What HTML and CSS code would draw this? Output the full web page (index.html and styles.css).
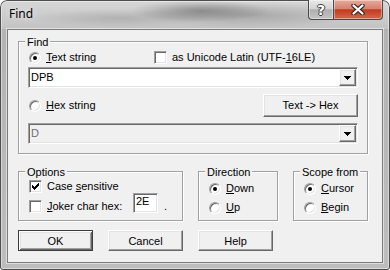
FILE: index.html
```html
<!DOCTYPE html>
<html lang="en">
<head>
  <meta charset="UTF-8">
  <title>Find</title>
  <link rel="stylesheet" href="styles.css">
</head>
<body>
  <div class="window">
    <div class="titlebar">
      <span class="title">Find</span>
      <div class="caption">
        <span class="cap cap-help">?</span>
        <span class="cap cap-close">
          <svg width="14" height="11" viewBox="0 0 14 11">
            <path d="M2.5 1.5 L11.5 9.5 M11.5 1.5 L2.5 9.5" stroke="#3b2a26" stroke-width="4.4" stroke-linecap="round"/>
            <path d="M2.5 1.5 L11.5 9.5 M11.5 1.5 L2.5 9.5" stroke="#fff" stroke-width="2.2" stroke-linecap="round"/>
          </svg>
        </span>
      </div>
    </div>

    <div class="client">
      <div class="group group-find">
        <div class="legend">Find</div>
        <div class="row row-text">
          <label class="opt opt-first"><span class="radio on"></span><span><u>T</u>ext string</span></label>
          <label class="opt"><span class="check"></span><span>as Unicode Latin (UTF-<u>1</u>6LE)</span></label>
        </div>
        <div class="combo">
          <span class="combo-text">DPB</span>
          <span class="drop"><svg width="7" height="4" viewBox="0 0 7 4" shape-rendering="crispEdges"><path d="M0 0h7v1h-1v1h-1v1h-1v1h-1v-1h-1v-1h-1v-1h-1z" fill="#000"/></svg></span>
        </div>
        <div class="row row-hex">
          <label class="opt"><span class="radio"></span><span><u>H</u>ex string</span></label>
          <span class="btn btn-tohex">Text -&gt; Hex</span>
        </div>
        <div class="combo combo-disabled">
          <span class="combo-text">D</span>
          <span class="drop"><svg width="7" height="4" viewBox="0 0 7 4" shape-rendering="crispEdges"><path d="M0 0h7v1h-1v1h-1v1h-1v1h-1v-1h-1v-1h-1v-1h-1z" fill="#000"/></svg></span>
        </div>
      </div>

      <div class="groups">
        <div class="group group-options">
          <div class="legend">Options</div>
          <div class="row row-case">
            <label class="opt">
              <span class="check"><svg width="11" height="11" viewBox="0 0 11 11" shape-rendering="crispEdges"><path d="M2 4h1v3h-1z M3 5h1v3h-1z M4 6h1v3h-1z M5 5h1v3h-1z M6 4h1v3h-1z M7 3h1v3h-1z M8 2h1v3h-1z" fill="#000"/></svg></span>
              <span>Case <u>s</u>ensitive</span>
            </label>
          </div>
          <div class="row row-joker">
            <label class="opt opt-joker"><span class="check"></span><span><u>J</u>oker char hex:</span></label>
            <span class="field">2E</span>
            <span class="dot">.</span>
          </div>
        </div>

        <div class="group group-direction">
          <div class="legend">Direction</div>
          <div class="row row-first">
            <label class="opt"><span class="radio on"></span><span><u>D</u>own</span></label>
          </div>
          <div class="row row-second">
            <label class="opt"><span class="radio"></span><span><u>U</u>p</span></label>
          </div>
        </div>

        <div class="group group-scope">
          <div class="legend">Scope from</div>
          <div class="row row-first">
            <label class="opt"><span class="radio on"></span><span><u>C</u>ursor</span></label>
          </div>
          <div class="row row-second">
            <label class="opt"><span class="radio"></span><span><u>B</u>egin</span></label>
          </div>
        </div>
      </div>

      <div class="buttons">
        <span class="btn btn-dlg btn-default">OK</span>
        <span class="btn btn-dlg">Cancel</span>
        <span class="btn btn-dlg">Help</span>
      </div>
    </div>
  </div>
</body>
</html>
```

FILE: styles.css
```css
body {
  margin: 0;
  font-family: "Liberation Sans", Arial, sans-serif;
  font-size: 11px;
  color: #000;
  background: #fff;
}

u {
  text-underline-offset: 1px;
}

.window {
  width: 390px;
  height: 270px;
  box-sizing: border-box;
  border-radius: 7px 7px 3px 3px;
  overflow: hidden;
  background:
    radial-gradient(ellipse 70px 11px at 200px 11px, rgba(80, 80, 80, 0.45), transparent),
    radial-gradient(ellipse 110px 13px at 250px 15px, rgba(100, 100, 100, 0.35), transparent),
    radial-gradient(ellipse 90px 9px at 120px 18px, rgba(120, 120, 120, 0.3), transparent),
    linear-gradient(#d7d7d7, #c3c3c3 29px, #b3b3b3 29px, #bdbdbd);
  box-shadow: inset 0 0 0 1px #4e4e4e, inset 0 0 0 2px rgba(255, 255, 255, 0.45);
}

.titlebar {
  height: 29px;
  display: flex;
  align-items: flex-start;
  justify-content: space-between;
}

.title {
  padding: 6px 0 0 9px;
  font: 12px/16px "Noto Sans", sans-serif;
  text-shadow: 0 0 6px rgba(255, 255, 255, 0.9);
}

.caption {
  display: flex;
  margin-right: 7px;
}

.cap {
  height: 20px;
  box-sizing: border-box;
  border: 1px solid #4a4a4a;
  border-top: 0;
  display: flex;
  align-items: center;
  justify-content: center;
  box-shadow: inset 0 0 0 1px rgba(255, 255, 255, 0.4);
}

.cap-help {
  width: 26px;
  border-radius: 0 0 0 4px;
  background: linear-gradient(#e8e8e8, #d4d4d4 45%, #aeaeae 52%, #c4c4c4);
  color: #fff;
  font: bold 14px/14px "DejaVu Sans", sans-serif;
  text-shadow: 1px 0 #3c3c3c, -1px 0 #3c3c3c, 0 1px #3c3c3c, 0 -1px #3c3c3c;
}

.cap-close {
  width: 49px;
  border-left: 0;
  border-radius: 0 0 4px 0;
  background: linear-gradient(#e6ab9c, #d88170 45%, #c23a1e 52%, #d4694d);
}

.client {
  margin: 0 7px;
  height: 234px;
  box-sizing: border-box;
  border: 1px solid #7b7b7b;
  box-shadow: 0 0 0 1px rgba(255, 255, 255, 0.5);
  background: #f0f0f0;
  padding-left: 10px;
}

/* etched group box */
.group {
  box-sizing: border-box;
  border: 1px solid #a0a0a0;
  box-shadow: inset 1px 1px #fff, 1px 1px #fff;
  padding: 0 9px 0 10px;
}

.legend {
  width: fit-content;
  margin: -6px 0 0 -4px;
  padding: 0 2px;
  line-height: 13px;
  white-space: nowrap;
  background: #f0f0f0;
}

.group-find {
  margin-top: 11px;
  width: 350px;
  height: 113px;
}

.row {
  display: flex;
  align-items: center;
  height: 13px;
  line-height: 13px;
  white-space: nowrap;
}

.opt {
  display: flex;
  align-items: center;
}

.opt-first {
  width: 125px;
}

.row-text {
  margin-top: 2px;
}

.radio {
  flex: none;
  width: 12px;
  height: 12px;
  box-sizing: border-box;
  border-radius: 50%;
  border: 1px solid;
  border-color: #a0a0a0 #fff #fff #a0a0a0;
  box-shadow: inset 1px 1px #696969, inset -1px -1px #e3e3e3;
  background: #fff;
  margin-right: 5px;
  display: flex;
  align-items: center;
  justify-content: center;
}

.radio.on::after {
  content: "";
  width: 4px;
  height: 4px;
  border-radius: 50%;
  background: #000;
}

.check {
  flex: none;
  width: 13px;
  height: 13px;
  box-sizing: border-box;
  border: 1px solid;
  border-color: #a0a0a0 #fff #fff #a0a0a0;
  box-shadow: inset 1px 1px #696969, inset -1px -1px #e3e3e3;
  background: #fff;
  margin-right: 5px;
}

.check svg {
  display: block;
}

.combo {
  margin: 3px 0 0 -1px;
  width: 330px;
  height: 21px;
  box-sizing: border-box;
  border: 1px solid;
  border-color: #a0a0a0 #fff #fff #a0a0a0;
  box-shadow: inset 1px 1px #696969, inset -1px -1px #e3e3e3;
  background: #fff;
  padding: 1px;
  display: flex;
}

.combo-text {
  flex: 1;
  padding-left: 1px;
  line-height: 17px;
}

.combo-disabled {
  margin-top: 6px;
  background: #f0f0f0;
  color: #6d6d6d;
}

/* raised 3d bevel */
.drop,
.btn {
  box-sizing: border-box;
  border: 1px solid;
  border-color: #fff #696969 #696969 #fff;
  box-shadow: inset -1px -1px #a0a0a0, inset 1px 1px #e3e3e3;
  background: #f0f0f0;
  display: flex;
  align-items: center;
  justify-content: center;
}

.drop {
  width: 17px;
  height: 17px;
  padding-top: 1px;
}

.row-hex {
  margin-top: 6px;
  height: 23px;
  justify-content: space-between;
}

.btn-tohex {
  width: 95px;
  height: 23px;
}

.groups {
  display: flex;
  gap: 15px;
  margin-top: 17px;
  height: 50px;
}

.group-options {
  width: 165px;
}

.group-direction {
  width: 80px;
}

.group-scope {
  width: 75px;
}

.row-case {
  margin-top: 1px;
}

.row-joker {
  height: 20px;
  align-items: flex-end;
}

.opt-joker {
  width: 104px;
  height: 13px;
}

.field {
  width: 25px;
  height: 20px;
  box-sizing: border-box;
  border: 1px solid;
  border-color: #a0a0a0 #fff #fff #a0a0a0;
  box-shadow: inset 1px 1px #696969, inset -1px -1px #e3e3e3;
  background: #fff;
  padding: 1px 2px 0;
  line-height: 13px;
}

.dot {
  margin-left: 6px;
}

.row-first {
  margin-top: 3px;
}

.row-second {
  margin-top: 6px;
}

.buttons {
  display: flex;
  gap: 15px;
  margin-top: 9px;
}

.btn-dlg {
  width: 75px;
  height: 21px;
}

.btn-default {
  border-color: #3c3c3c;
  box-shadow: inset 1px 1px #fff, inset -1px -1px #696969, inset 2px 2px #e3e3e3, inset -2px -2px #a0a0a0;
}
```
